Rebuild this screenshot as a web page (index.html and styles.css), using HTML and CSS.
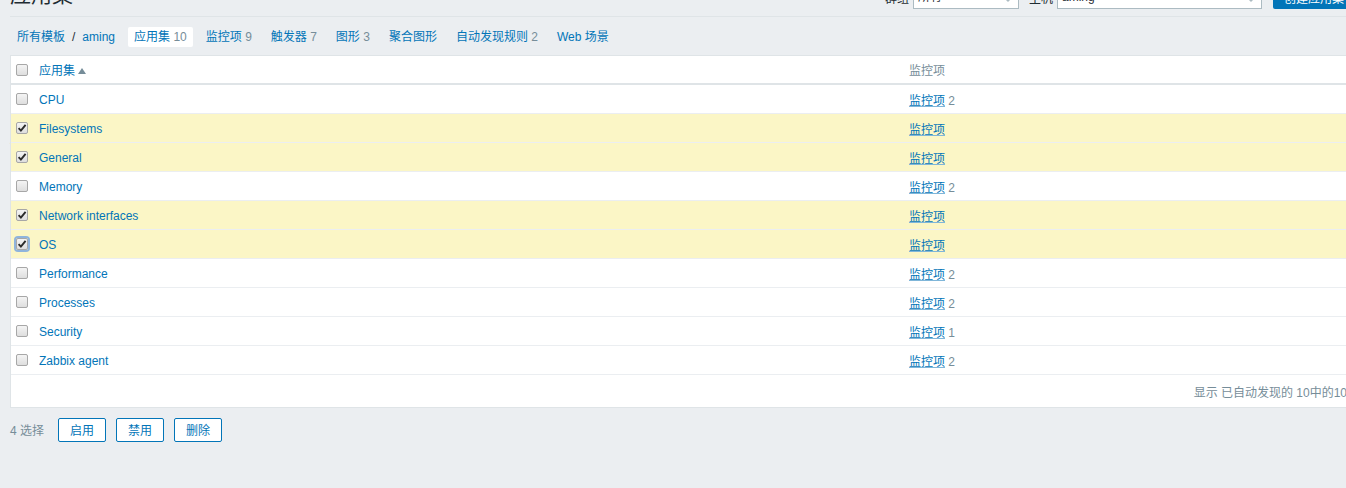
FILE: index.html
```html
<!DOCTYPE html>
<html lang="zh">
  <head>
    <meta charset="UTF-8" />
    <title>应用集</title>
    <link rel="stylesheet" href="styles.css">
  </head>
  <body>
    <div class="page">
      <header class="header-title">
        <h1>应用集</h1>
        <div class="controls">
          <label class="filter">群组
            <span class="select select-group">所有<i class="arrow"></i></span>
          </label>
          <label class="filter">主机
            <span class="select select-host">aming<i class="arrow"></i></span>
          </label>
          <button class="btn-create">创建应用集</button>
        </div>
      </header>

      <nav class="object-nav">
        <span class="nav-item crumbs">
          <a href="#">所有模板</a><span class="sep">/</span><a href="#">aming</a>
        </span>
        <span class="nav-item active"><a href="#">应用集</a> <sup>10</sup></span>
        <span class="nav-item"><a href="#">监控项</a> <sup>9</sup></span>
        <span class="nav-item"><a href="#">触发器</a> <sup>7</sup></span>
        <span class="nav-item"><a href="#">图形</a> <sup>3</sup></span>
        <span class="nav-item"><a href="#">聚合图形</a></span>
        <span class="nav-item"><a href="#">自动发现规则</a> <sup>2</sup></span>
        <span class="nav-item"><a href="#">Web 场景</a></span>
      </nav>

      <div class="table-box">
        <table class="list-table">
          <thead>
            <tr>
              <th class="cell-check"><span class="checkbox"></span></th>
              <th class="cell-name"><a href="#">应用集</a><span class="sort-arrow"></span></th>
              <th>监控项</th>
            </tr>
          </thead>
          <tbody id="app-rows">
            <!-- rows from script -->
          </tbody>
        </table>
        <div class="table-paging">显示 已自动发现的 10中的10</div>
      </div>

      <div class="action-buttons">
        <span class="selected-count">4 选择</span>
        <button class="btn-alt">启用</button>
        <button class="btn-alt">禁用</button>
        <button class="btn-alt">删除</button>
      </div>
    </div>

    <script>
      const apps = [
        { name: "CPU", items: 2, checked: false },
        { name: "Filesystems", items: 0, checked: true },
        { name: "General", items: 0, checked: true },
        { name: "Memory", items: 2, checked: false },
        { name: "Network interfaces", items: 0, checked: true },
        { name: "OS", items: 0, checked: true, focus: true },
        { name: "Performance", items: 2, checked: false },
        { name: "Processes", items: 2, checked: false },
        { name: "Security", items: 1, checked: false },
        { name: "Zabbix agent", items: 2, checked: false }
      ];

      const tick =
        '<svg viewBox="0 0 12 12" width="12" height="12"><path d="M2.6 6.2 L4.9 8.6 L9.6 2.8" fill="none" stroke="#2b2b2b" stroke-width="1.9"/></svg>';

      const rows = document.getElementById("app-rows");
      apps.forEach(function (app) {
        const row = document.createElement("tr");
        if (app.checked) row.className = "row-selected";
        let box = "checkbox";
        if (app.checked) box += " checked";
        if (app.focus) box += " focused";
        row.innerHTML = `
          <td class="cell-check"><span class="${box}">${app.checked ? tick : ""}</span></td>
          <td class="cell-name"><a href="#">${app.name}</a></td>
          <td><a href="#" class="link-items">监控项</a>${app.items ? ' <sup>' + app.items + '</sup>' : ""}</td>
        `;
        rows.appendChild(row);
      });
    </script>
  </body>
</html>
```

FILE: styles.css
```css
body {
  margin: 0;
  background-color: #ebeef1;
  color: #1f2c33;
  font-family: "Liberation Sans", Arial, "Noto Sans CJK SC", sans-serif;
  font-size: 12px;
  overflow: hidden;
}
a {
  color: #0275b8;
  text-decoration: none;
}
sup {
  font-size: 12px;
  vertical-align: baseline;
  color: #768d99;
}
.page {
  width: 1342px;
  padding-left: 10px;
}
.header-title {
  display: flex;
  justify-content: space-between;
  align-items: flex-end;
  height: 46px;
  margin-top: -30px;
  border-bottom: 1px solid #dfe4e7;
}
.header-title h1 {
  margin: 0 0 9px;
  font-size: 21px;
  font-weight: normal;
  line-height: 24px;
  color: #1f2c33;
}
.controls {
  display: flex;
  align-items: flex-end;
  margin-bottom: 7px;
  margin-right: -71px;
}
.filter {
  display: flex;
  align-items: center;
  gap: 4px;
  margin-right: 10px;
}
.select {
  position: relative;
  display: block;
  height: 22px;
  line-height: 22px;
  padding: 0 4px;
  border: 1px solid #acbbc2;
  background-color: #fff;
}
.select-group {
  width: 96px;
}
.select-host {
  width: 195px;
}
.arrow {
  position: absolute;
  right: 7px;
  top: 13px;
  border-left: 3px solid transparent;
  border-right: 3px solid transparent;
  border-top: 3px solid #acbbc2;
}
.btn-create {
  height: 24px;
  padding: 0 11px;
  margin-left: 1px;
  border: none;
  border-radius: 2px;
  background-color: #0275b8;
  color: #fff;
  font-family: inherit;
  font-size: 12px;
  width: 150px;
  text-align: left;
}
.object-nav {
  display: flex;
  padding: 10px 0 8px 1px;
}
.nav-item {
  height: 20px;
  line-height: 20px;
  padding: 0 6px;
  margin-right: 7px;
}
.nav-item.active {
  background-color: #fff;
  border-radius: 2px;
}
.crumbs .sep {
  margin: 0 7px;
  color: #1f2c33;
}
.table-box {
  background-color: #fff;
  border: 1px solid #dfe4e7;
  border-right: none;
}
.list-table {
  width: 100%;
  border-collapse: collapse;
}
.list-table th,
.list-table td {
  height: 28px;
  padding: 0 5px;
  text-align: left;
  vertical-align: middle;
  box-sizing: border-box;
}
.list-table th {
  font-weight: normal;
  color: #768d99;
  border-bottom: 2px solid #dfe4e7;
}
.list-table td {
  height: 29px;
  padding-top: 2px;
  border-bottom: 1px solid #ebeef1;
}
.list-table .cell-check {
  width: 23px;
  padding-right: 0;
  font-size: 0;
}
.list-table td.cell-check {
  padding-top: 0;
}
.list-table .cell-name {
  width: 870px;
}
.row-selected td {
  background-color: #fbf6c6;
}
.link-items {
  text-decoration: underline;
  text-decoration-color: #7fb6d9;
}
.sort-arrow {
  display: inline-block;
  margin-left: 3px;
  vertical-align: 1px;
  border-left: 4px solid transparent;
  border-right: 4px solid transparent;
  border-bottom: 6px solid #768d99;
}
.checkbox {
  display: inline-block;
  box-sizing: border-box;
  width: 12px;
  height: 12px;
  border: 1px solid #a7a7a7;
  border-radius: 2px;
  background: linear-gradient(#f4f4f4, #dedede);
  vertical-align: middle;
}
.checkbox svg {
  display: block;
  margin: -1px;
}
.checkbox.focused {
  box-shadow: 0 0 0 2px #8fb4dc;
}
.table-paging {
  height: 32px;
  line-height: 32px;
  padding: 2px 5px 0 0;
  box-sizing: border-box;
  text-align: right;
  color: #768d99;
}
.action-buttons {
  display: flex;
  align-items: center;
  margin-top: 10px;
}
.selected-count {
  color: #768d99;
  margin-right: 14px;
}
.btn-alt {
  height: 24px;
  padding: 0 11px;
  margin-right: 10px;
  border: 1px solid #0275b8;
  border-radius: 2px;
  background-color: #fff;
  color: #0275b8;
  font-family: inherit;
  font-size: 12px;
  cursor: pointer;
}
```
